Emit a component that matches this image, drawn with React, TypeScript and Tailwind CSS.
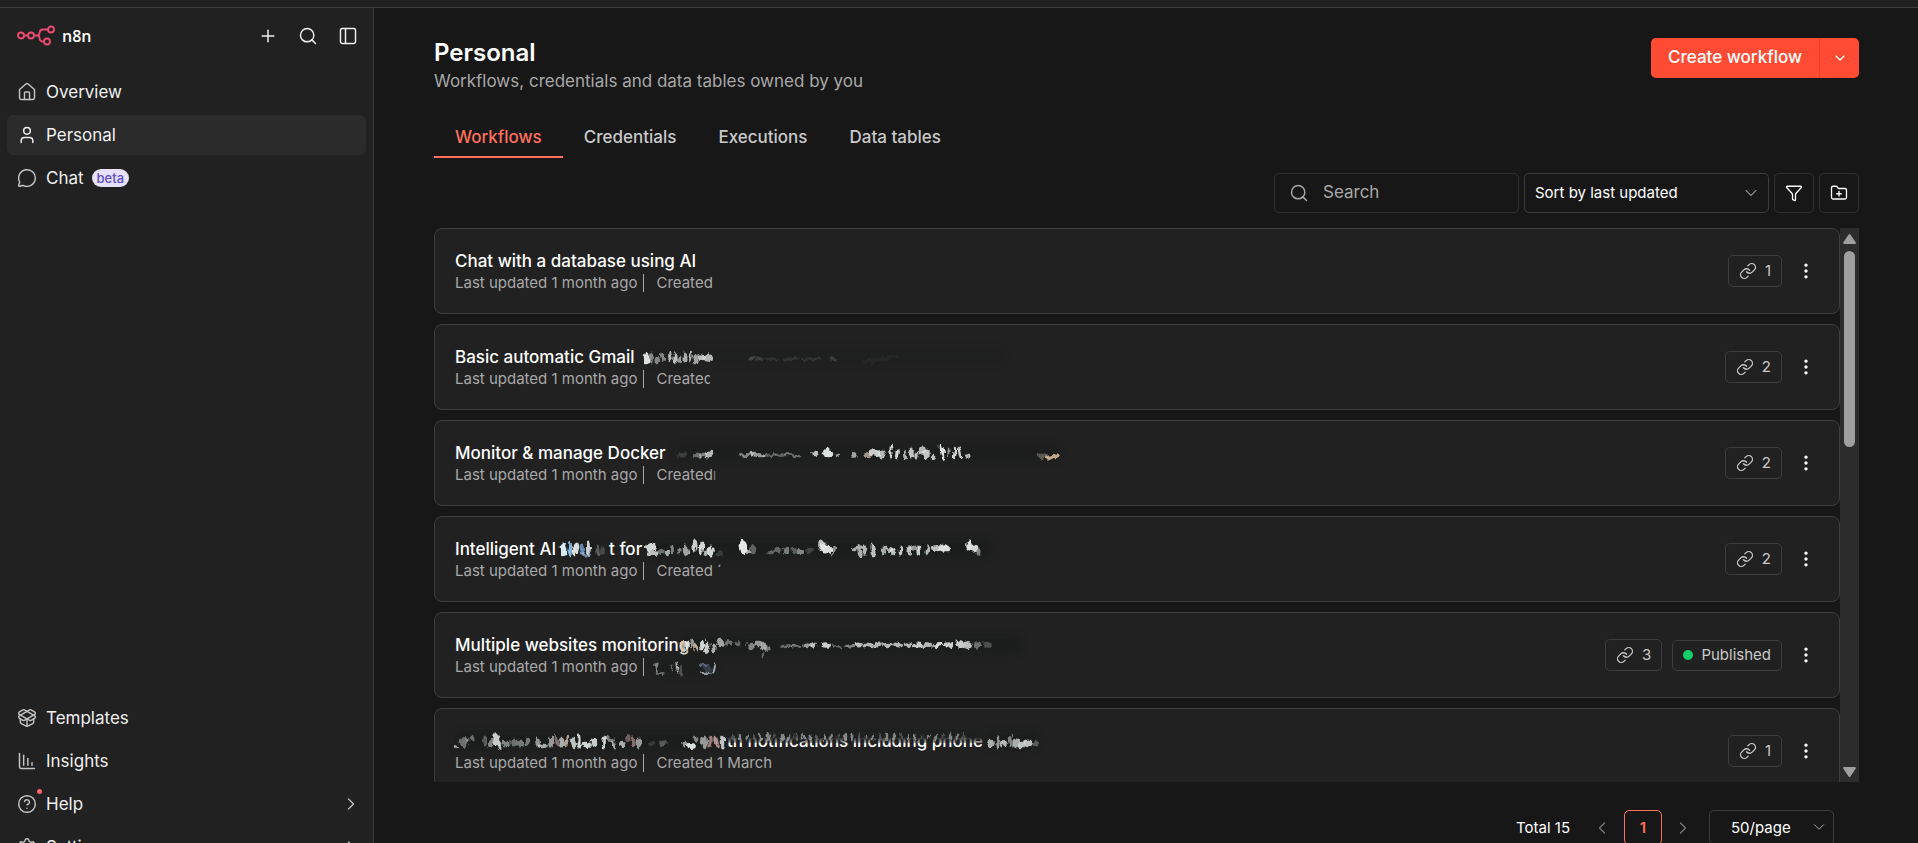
import type { ReactNode } from "react";
import {
  ChartColumnDecreasing,
  ChevronDown,
  ChevronLeft,
  ChevronRight,
  CircleQuestionMark,
  EllipsisVertical,
  FolderPlus,
  Funnel,
  House,
  Link,
  MessageCircle,
  PackageOpen,
  PanelLeft,
  Plus,
  Search,
  Settings,
  User,
  type LucideIcon,
} from "lucide-react";

/** [x, y, rx, ry, opacity, colour] */
type Blob = [number, number, number, number, number, string?];

/** A soft smear that hides part of a line of text. */
function Smear({ id, width, blobs, haze = 0.35 }: { id: string; width: number; blobs: Blob[]; haze?: number }) {
  return (
    <svg width={width} height="24" viewBox={`0 0 ${width} 24`} className="shrink-0 overflow-visible" aria-hidden="true">
      <filter id={id} filterUnits="userSpaceOnUse" x="-6" y="-4" width={width + 12} height="34">
        <feTurbulence type="fractalNoise" baseFrequency="0.22 0.12" numOctaves="2" seed="7" result="noise" />
        <feDisplacementMap in="SourceGraphic" in2="noise" scale="7" xChannelSelector="R" yChannelSelector="G" />
        <feGaussianBlur stdDeviation="0.6" />
      </filter>
      <rect x="0" y="3" width={width} height="17" rx="8" fill="#151717" opacity={haze} className="blur-[4px]" />
      <g filter={`url(#${id})`}>
        {blobs.map(([x, y, rx, ry, o, c], i) => (
          <ellipse
            key={i}
            cx={x}
            cy={y}
            rx={rx * 1.25}
            ry={ry * 1.1}
            opacity={o}
            fill={c ?? "#e6ebea"}
            transform={`rotate(${(i % 3) * 10 - 10} ${x} ${y})`}
          />
        ))}
      </g>
    </svg>
  );
}

const gmailBlobs: Blob[] = [
  [3, 13, 2.5, 5, 0.95], [7, 13, 1.5, 5, 0.5], [13, 15, 2, 3, 0.5], [19, 12, 1.5, 4, 0.5], [26, 11, 1.5, 4, 0.75],
  [31, 13, 2, 5, 0.8], [36, 15, 1.5, 3, 0.6], [41, 13, 1.2, 5, 0.7], [47, 12, 1.2, 5, 0.8], [52, 14, 2, 4, 0.65],
  [58, 12, 3, 3, 0.8], [64, 13, 4, 3.5, 0.75], [108, 13, 3, 1.5, 0.2], [116, 14, 3, 2, 0.16], [128, 14, 6, 1.5, 0.1],
  [146, 14, 7, 1.5, 0.1], [166, 14, 8, 1.5, 0.1], [188, 14, 3, 2, 0.15], [236, 14, 14, 2, 0.04],
];

const dockerBlobs: Blob[] = [
  [8, 14, 4, 2, 0.15], [22, 14, 3, 2, 0.4], [28, 14, 3, 2, 0.5], [34, 13, 4, 3, 0.75], [72, 14, 6, 1.8, 0.5],
  [82, 14, 6, 1.8, 0.6], [94, 14, 6, 1.5, 0.35], [106, 14, 5, 1.5, 0.35], [118, 14, 7, 1.5, 0.4], [140, 13, 3, 2, 0.8],
  [153, 12, 5, 4, 0.95], [163, 14, 2, 1.5, 0.6], [179, 14, 3, 2.5, 0.65], [193, 14, 3, 3, 0.7, "#dccbb4"],
  [200, 12, 5, 3.5, 0.85], [207, 13, 3, 4, 0.75], [216, 10, 1.3, 6, 0.9], [222, 13, 1.4, 4, 0.9], [230, 14, 1.5, 4, 0.7],
  [236, 12, 1.4, 5, 0.8], [241, 14, 2, 4, 0.8], [247, 9, 3, 4, 0.75], [251, 13, 3, 4, 0.8], [258, 17, 1, 2, 0.8],
  [267, 11, 1.5, 7, 0.95], [274, 12, 1.2, 5, 0.6], [279, 12, 1.4, 6, 0.9], [285, 12, 1.4, 5, 0.85], [293, 15, 2, 2.5, 0.75],
  [368, 15, 5, 2, 0.4, "#b9b2a6"], [377, 16, 7, 1.8, 0.9, "#d6b894"],
];

const agentBlobs: Blob[] = [
  [3, 12, 2.5, 6, 0.95, "#dff4ff"], [9, 12, 1.8, 6, 0.9, "#8fc3ef"], [15, 12, 2.5, 6, 0.95], [21, 12, 1.6, 6, 0.9, "#6d97c4"],
  [27, 11, 1.6, 7, 0.9], [25, 17, 4, 1.5, 0.7, "#9cbbe0"], [37, 14, 1.5, 5, 0.3], [41, 14, 1.5, 5, 0.2],
];

const forBlobs: Blob[] = [
  [4, 10, 4, 4, 0.9], [6, 16, 5, 1.8, 0.8], [14, 15, 3, 2, 0.4], [21, 16, 1.5, 3, 0.7], [25, 12, 1.5, 3, 0.5], [32, 13, 2, 3, 0.5],
  [39, 14, 2.5, 5, 0.65], [48, 9, 2, 6, 0.85], [54, 11, 1.6, 6, 0.9], [58, 16, 1.5, 3, 0.7], [63, 14, 3, 5, 0.9], [72, 17, 2, 3, 0.15],
  [96, 10, 3.5, 6, 0.98], [101, 15, 2, 2, 0.7], [106, 13, 2.5, 4, 0.35], [124, 15, 3, 2, 0.35], [131, 13, 3, 3, 0.35],
  [139, 14, 2.5, 3, 0.45], [147, 13, 2, 3, 0.3], [153, 15, 3, 3, 0.5], [163, 13, 3, 3, 0.2], [175, 8, 3, 4, 0.8],
  [178, 12, 6, 4, 0.95], [187, 13, 1.5, 4, 0.55], [211, 11, 5, 2, 0.7], [213, 16, 2, 3, 0.7], [218, 13, 1.6, 5, 0.75],
  [226, 13, 1.8, 6, 0.8], [236, 14, 1.5, 4, 0.7], [243, 12, 5, 1.8, 0.7], [246, 15, 1.6, 4, 0.8], [254, 14, 1.8, 5, 0.85],
  [262, 14, 1.8, 5, 0.8], [267, 11, 4, 2, 0.6], [272, 14, 2, 5, 0.85], [280, 13, 1.8, 5, 0.75], [289, 11, 4, 2.5, 0.8],
  [297, 11, 4, 3.5, 0.95], [322, 9, 3, 5, 0.95], [327, 12, 3.5, 3, 0.9], [332, 15, 2, 2.5, 0.5],
];

const monitorBlobs: Blob[] = [
  [2, 13, 1.5, 5, 0.85, "#e5c9a4"], [6, 12, 1.5, 4, 0.9], [11, 11, 1.5, 4, 0.6], [15, 15, 1.5, 5, 0.8, "#e2cfb2"],
  [21, 12, 1.6, 5, 0.9], [26, 14, 1.8, 5, 0.85], [33, 14, 2, 4, 0.7], [39, 10, 3, 3, 0.65], [48, 10, 3, 2.5, 0.4],
  [57, 10, 2, 2, 0.35], [70, 13, 3, 3, 0.5], [77, 11, 3, 3, 0.6], [82, 13, 2, 4, 0.65], [86, 16, 2, 3, 0.45], [82, 22, 1, 3, 0.35],
  [104, 13, 5, 1.2, 0.4], [115, 13, 4, 1.5, 0.45], [125, 12, 3, 2, 0.6], [132, 12, 3, 2.5, 0.8], [145, 12, 4, 2.5, 0.85],
  [156, 13, 4, 1.2, 0.4], [168, 13, 4, 1.5, 0.5], [177, 12, 4, 2.3, 0.8], [187, 12, 4, 2, 0.75], [197, 12, 4, 2, 0.75],
  [207, 12, 4, 2, 0.75], [217, 12, 4, 2, 0.75], [227, 12, 3.5, 2, 0.75], [237, 12, 4, 2.3, 0.85], [247, 12, 4, 2.5, 0.75],
  [257, 12, 4, 2.5, 0.9], [267, 12, 4, 2.5, 0.85], [279, 11, 3, 3.5, 0.85], [287, 12, 4, 3.5, 0.8], [296, 12, 2.5, 3.5, 0.4], [305, 12, 3, 3, 0.25],
];

const createdBlobs: Blob[] = [
  [1, 13, 1, 5, 0.5], [5, 18, 3, 1, 0.35], [16, 13, 0.8, 4, 0.35], [21, 12, 0.9, 6, 0.7], [25, 15, 0.8, 5, 0.25],
  [47, 10, 4, 1.2, 0.55, "#8ea2c8"], [52, 14, 3, 4, 0.35, "#64759a"], [49, 18, 5, 1, 0.6], [58, 13, 1.2, 5, 0.7],
];

const leadBlobs: Blob[] = [
  [1, 17, 1.5, 1.5, 0.8], [9, 13, 3.5, 4.5, 0.4], [13, 11, 2, 2, 0.3], [18, 9, 1, 3, 0.4], [30, 12, 1.5, 5, 0.35], [36, 14, 2, 4, 0.5],
  [42, 12, 3, 6, 0.85], [45, 19, 2, 3, 0.75], [51, 15, 3, 2, 0.5], [59, 13, 3, 4, 0.4], [66, 15, 3, 3, 0.45],
  [73, 12, 2, 4, 0.45], [82, 13, 1.5, 5, 0.6], [88, 17, 4, 2, 0.7], [96, 13, 2, 6, 0.6], [102, 12, 1.6, 7, 0.6, "#c7a8a0"],
  [107, 14, 2, 5, 0.7], [112, 11, 1.5, 6, 0.8, "#d8c3b0"], [118, 14, 2.5, 5, 0.8], [124, 12, 1.3, 7, 0.9], [131, 16, 4, 3, 0.9],
  [139, 14, 2.5, 4, 0.85], [149, 13, 1.5, 6, 0.9], [155, 10, 4, 2, 0.5], [158, 15, 1.5, 4, 0.7], [167, 15, 2, 3, 0.7],
  [172, 10, 2, 3, 0.45, "#d8b0b0"], [178, 13, 2, 5, 0.6, "#c9a6a2"], [184, 14, 2, 5, 0.6], [196, 15, 3, 2, 0.15], [208, 14, 3, 3, 0.3],
  [230, 14, 3, 2, 0.6], [236, 17, 4, 2.5, 0.95], [240, 10, 2, 2, 0.5], [249, 13, 2.5, 6, 0.6], [255, 13, 2, 6, 0.7, "#d6a8a8"],
  [261, 13, 2, 6, 0.75, "#e2b9b9"], [267, 13, 1.8, 6, 0.8],
];

const tailBlobs: Blob[] = [
  [3, 14, 3, 3, 0.7], [10, 13, 1.5, 5, 0.6], [16, 15, 3, 3, 0.75], [22, 12, 1.5, 5, 0.5], [28, 14, 3, 4, 0.7],
  [34, 15, 3, 3, 0.8], [40, 14, 3, 4, 0.8], [47, 15, 3, 2, 0.3],
];

/** Slanted streaks that run over the top half of a legible phrase. */
const streakBlobs: Blob[] = Array.from({ length: 34 }, (_, i): Blob => [6 + i * 7, 8, 1, 3, i % 3 === 0 ? 0.25 : 0.5]);

type Workflow = { id: number; title: ReactNode; created: ReactNode; links: number; published?: boolean };

const workflows: Workflow[] = [
  { id: 1, title: "Chat with a database using AI", created: "Created", links: 1 },
  {
    id: 2,
    title: (
      <>
        <span>Basic automatic Gmail</span>
        <span className="pl-1"><Smear id="smear-gmail" width={360} blobs={gmailBlobs} haze={0.2} /></span>
      </>
    ),
    created: (
      <span className="relative">
        Created
        <span className="absolute inset-y-0 right-0 w-[3px] bg-[#212121]" />
      </span>
    ),
    links: 2,
  },
  {
    id: 3,
    title: (
      <>
        <span>Monitor &amp; manage Docker</span>
        <span className="pl-1"><Smear id="smear-docker" width={385} blobs={dockerBlobs} /></span>
      </>
    ),
    created: (<>Created<span className="opacity-60" aria-hidden="true">ı</span></>),
    links: 2,
  },
  {
    id: 4,
    title: (
      <>
        <span>Intelligent AI</span>
        <Smear id="smear-agent" width={43} blobs={agentBlobs} />
        <span>t for</span>
        <Smear id="smear-for" width={345} blobs={forBlobs} haze={0.5} />
      </>
    ),
    created: (<>Created <span aria-hidden="true">´</span></>),
    links: 2,
  },
  {
    id: 5,
    title: (
      <span className="flex">
        <span>Multiple websites monitoring</span>
        <span className="-ml-2"><Smear id="smear-monitor" width={340} blobs={monitorBlobs} haze={0.5} /></span>
      </span>
    ),
    created: <Smear id="smear-created" width={60} blobs={createdBlobs} haze={0.3} />,
    links: 3,
    published: true,
  },
  {
    id: 6,
    title: (
      <>
        <Smear id="smear-lead" width={267} blobs={leadBlobs} haze={0.5} />
        <span className="relative">
          th notifications including phone
          <span className="absolute inset-x-0 top-0 h-[14px] bg-linear-to-b from-[#1e1f1f] from-60% to-[#1e1f1f]/30" />
          <span className="absolute top-0 left-0"><Smear id="smear-streaks" width={245} blobs={streakBlobs} haze={0} /></span>
        </span>
        <Smear id="smear-tail" width={50} blobs={tailBlobs} haze={0.5} />
      </>
    ),
    created: "Created 1 March",
    links: 1,
  },
];

function Logo() {
  return (
    <a href="#home" className="flex items-center gap-[6px]" aria-label="n8n">
      <svg width="39" height="22" viewBox="0 0 39 22" fill="none" stroke="#ea4b71" strokeWidth="1.9" aria-hidden="true">
        <circle cx="4" cy="10.5" r="3" />
        <circle cx="14" cy="10.5" r="3" />
        <circle cx="34" cy="4.5" r="3" />
        <circle cx="30" cy="16.5" r="3" />
        <path d="M7 10.5h4M17 10.5h3.2M31 4.5h-5.2a3 3 0 0 0-3 2.5l-.4 1.5a2.4 2.4 0 0 1-2.4 2 2.4 2.4 0 0 1 2.4 2l.4 1.6a3 3 0 0 0 3 2.4H27" />
      </svg>
      <span className="font-['Open_Sans',sans-serif] text-[16px] leading-5 font-semibold text-white">n8n</span>
    </a>
  );
}

function NavItem({
  icon: Icon, label, active, badge, dot, arrow,
}: { icon: LucideIcon; label: string; active?: boolean; badge?: string; dot?: boolean; arrow?: boolean }) {
  return (
    <li>
      <a
        href={`#${label.toLowerCase()}`}
        aria-current={active ? "page" : undefined}
        className={`flex h-10 items-center rounded-md pr-[5px] pl-[10px] text-[#f0f0f0] hover:bg-[#2b2b2b] ${active ? "bg-[#2b2b2b]" : ""}`}
      >
        <span className={`relative mr-[9px] ${active ? "text-[#f0f0f0]" : "text-[#c4c4c4]"}`}>
          <Icon size={20} strokeWidth={1.75} />
          {dot && <span className="absolute -top-[5px] -right-[5px] size-[5px] rounded-full bg-[#f4686c]" />}
        </span>
        <span className="text-[17px] leading-6">{label}</span>
        {badge && <span className="ml-2 rounded-full bg-[#e6e1f8] px-[5px] text-[13px] leading-[18px] font-medium text-[#5f4fc0]">{badge}</span>}
        {arrow && <ChevronRight size={20} strokeWidth={1.5} className="ml-auto text-[#c4c4c4]" />}
      </a>
    </li>
  );
}

function Sidebar() {
  return (
    <aside className="flex w-[374px] shrink-0 flex-col border-r border-[#3d3d3d] bg-[#212121] px-[7px]">
      <div className="flex h-14 items-center justify-between pr-[8px] pl-[10px]">
        <Logo />
        <div className="flex gap-5 text-[#f0f0f0]">
          <button type="button" aria-label="Add"><Plus size={20} strokeWidth={1.75} /></button>
          <button type="button" aria-label="Search"><Search size={20} strokeWidth={1.75} /></button>
          <button type="button" aria-label="Toggle sidebar"><PanelLeft size={20} strokeWidth={1.75} /></button>
        </div>
      </div>
      <nav className="-mb-6 flex flex-1 flex-col justify-between pt-2">
        <ul className="flex flex-col gap-[3px]">
          <NavItem icon={House} label="Overview" />
          <NavItem icon={User} label="Personal" active />
          <NavItem icon={MessageCircle} label="Chat" badge="beta" />
        </ul>
        <ul className="flex flex-col gap-[3px]">
          <NavItem icon={PackageOpen} label="Templates" />
          <NavItem icon={ChartColumnDecreasing} label="Insights" />
          <NavItem icon={CircleQuestionMark} label="Help" dot arrow />
          <NavItem icon={Settings} label="Settings" arrow />
        </ul>
      </nav>
    </aside>
  );
}

function WorkflowCard({ workflow }: { workflow: Workflow }) {
  return (
    <li className="flex h-[86px] shrink-0 items-center rounded-lg border border-[#3d3d3d] bg-[#212121] pr-[23px] pl-5">
      <div className="min-w-0 flex-1">
        <h2 className="flex h-6 gap-[5px] text-[17px] leading-6 font-medium whitespace-nowrap text-white">{workflow.title}</h2>
        <div className="flex h-5 items-center text-[15px] leading-5 whitespace-nowrap text-[#a8a8a8]">
          <span>Last updated 1 month ago</span>
          <span className="mr-3 ml-[6px] h-[18px] w-px bg-[#a8a8a8]" />
          <span>{workflow.created}</span>
        </div>
      </div>
      <div className="flex items-center gap-[10px] text-[15px] leading-5 text-[#c9c9c9]">
        <button type="button" className="flex h-8 items-center gap-2 rounded-[5px] border border-[#3d3d3d] px-[10px]" aria-label={`${workflow.links} linked resources`}>
          <Link size={18} strokeWidth={1.75} />
          <span>{workflow.links}</span>
        </button>
        {workflow.published && (
          <span className="flex h-[31px] items-center gap-2 rounded-[5px] border border-[#3d3d3d] px-[10px]">
            <span className="size-[10px] rounded-full bg-[#14cf69]" />
            Published
          </span>
        )}
      </div>
      <button type="button" aria-label="More actions" className="ml-[14px] text-white">
        <EllipsisVertical size={20} strokeWidth={2} />
      </button>
    </li>
  );
}

export default function App() {
  return (
    <div className="flex h-screen flex-col overflow-hidden bg-[#171717] font-['Inter',sans-serif] text-white">
      <div className="h-2 shrink-0 border-b border-[#3d3d3d] bg-[#212121]" />
      <div className="flex min-h-0 flex-1">
        <Sidebar />
        <main className="flex min-w-0 flex-1 flex-col pt-[30px] pr-[59px] pl-[60px]">
          <header className="flex items-start justify-between">
            <div>
              <h1 className="text-2xl leading-[30px] font-semibold">Personal</h1>
              <p className="text-[17px] leading-[26px] text-[#a8a8a8]">Workflows, credentials and data tables owned by you</p>
            </div>
            <div className="flex h-10 overflow-hidden rounded-[5px] bg-[#ff4b33] text-[17px] font-medium">
              <button type="button" className="px-[17px]">Create workflow</button>
              <button type="button" aria-label="More create options" className="flex w-10 items-center justify-center border-l border-[#e8432d]">
                <ChevronDown size={16} strokeWidth={2} />
              </button>
            </div>
          </header>

          <nav className="mt-[23px] flex text-[17px] leading-6 font-medium text-[#c9c9c9]">
            <a href="#workflows" aria-current="page" className="border-b-2 border-[#ff6f5c] px-[21px] pt-2 pb-[7px] text-[#ff6f5c]">Workflows</a>
            <a href="#credentials" className="px-[21px] pt-2 pb-[7px]">Credentials</a>
            <a href="#executions" className="px-[21px] pt-2 pb-[7px]">Executions</a>
            <a href="#data-tables" className="px-[21px] pt-2 pb-[7px]">Data tables</a>
          </nav>

          <div className="mt-[15px] flex h-10 shrink-0 justify-end gap-[5px]">
            <label className="flex w-[245px] items-center gap-[14px] rounded-[5px] border border-[#303030] px-[14px] text-[#a8a8a8]">
              <Search size={20} strokeWidth={1.75} className="shrink-0" />
              <input type="search" placeholder="Search" aria-label="Search" className="w-full min-w-0 bg-transparent text-[17px] outline-none placeholder:text-[#a8a8a8]" />
            </label>
            <div className="relative w-[245px]">
              <select aria-label="Sort workflows" className="size-full appearance-none rounded-[5px] border border-[#3d3d3d] bg-[#171717] px-[10px] pt-px text-[15px] text-white">
                <option>Sort by last updated</option>
                <option>Sort by name</option>
              </select>
              <ChevronDown size={20} strokeWidth={1.25} className="pointer-events-none absolute top-[10px] right-2 text-[#b0b0b0]" />
            </div>
            <button type="button" aria-label="Filter" className="flex w-10 items-center justify-center rounded-[5px] border border-[#303030]">
              <Funnel size={18} strokeWidth={1.75} />
            </button>
            <button type="button" aria-label="New folder" className="flex w-10 items-center justify-center rounded-[5px] border border-[#303030]">
              <FolderPlus size={18} strokeWidth={1.75} />
            </button>
          </div>

          <div className="mt-[15px] flex min-h-0 flex-1">
            <ul className="flex min-w-0 flex-1 flex-col gap-[10px] overflow-hidden">
              {workflows.map((w) => (
                <WorkflowCard key={w.id} workflow={w} />
              ))}
            </ul>
            <div className="flex w-[19px] flex-col items-center bg-[#2c2c2c] pt-[6px] pb-[5px]" aria-hidden="true">
              <svg width="13" height="10" viewBox="0 0 13 10" fill="#9f9f9f"><path d="M5.6.6a1.2 1.2 0 0 1 1.8 0l5.2 7.7c.5.8.1 1.7-.8 1.7H1.2C.3 10-.1 9.100.4 8.300z" /></svg>
              <div className="mt-[7px] h-[196px] w-[11px] rounded-full bg-[#9f9f9f]" />
              <svg width="13" height="10" viewBox="0 0 13 10" fill="#9f9f9f" className="mt-auto"><path d="M5.6 9.400a1.2 1.2 0 0 0 1.8 0l5.200-7.700C13.100.900 12.700 0 11.800 0H1.200C.3 0-.1.900.4 1.700z" /></svg>
            </div>
          </div>

          <footer className="flex h-[61px] shrink-0 items-start justify-end pt-7 pr-[25px] text-[15px] leading-5">
            <div className="flex h-[35px] shrink-0 items-center">
              <span>Total 15</span>
              <button type="button" aria-label="Previous page" className="ml-[22px] text-[#7a7a7a]"><ChevronLeft size={20} strokeWidth={1.5} /></button>
              <button type="button" aria-current="page" className="ml-3 h-[35px] w-[38px] rounded-[5px] border border-[#ff6f5c] font-semibold text-[#ff6f5c]">1</button>
              <button type="button" aria-label="Next page" className="ml-[11px] text-[#7a7a7a]"><ChevronRight size={20} strokeWidth={1.5} /></button>
              <div className="relative ml-4 h-[35px] w-[125px]">
                <select aria-label="Items per page" className="size-full appearance-none rounded-[5px] border border-[#3d3d3d] bg-[#171717] pl-[21px] text-[15px] text-white">
                  <option>50/page</option>
                  <option>100/page</option>
                </select>
                <ChevronDown size={18} strokeWidth={1.25} className="pointer-events-none absolute top-2 right-[6px] text-[#b0b0b0]" />
              </div>
            </div>
          </footer>
        </main>
      </div>
    </div>
  );
}
